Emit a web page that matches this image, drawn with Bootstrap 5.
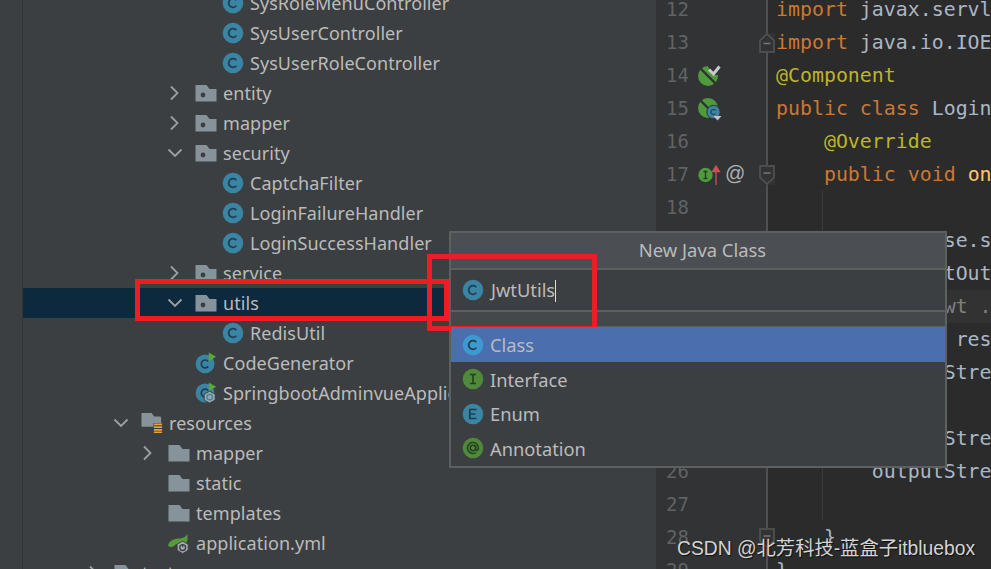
<!DOCTYPE html>
<html lang="en">
<head>
<meta charset="utf-8">
<title>New Java Class</title>
<link href="https://cdn.jsdelivr.net/npm/bootstrap@5.3.0/dist/css/bootstrap.min.css" rel="stylesheet">
<style>
html,body{height:569px;overflow:hidden;background:#3c3f41}
body{position:relative;width:991px;font-family:"Noto Sans","Liberation Sans",sans-serif}
.ide{height:569px;overflow:hidden}
.rail{width:23px;flex:none;border-right:1px solid #323435}
.tree{width:633px;flex:none;margin-top:-12px;font-size:18px;letter-spacing:.06px;color:#bbb}
.trow{height:30px;white-space:nowrap}
.trow.picked{background:#0d293e}
.lv0{padding-left:57px}.lv1{padding-left:84px}.lv2{padding-left:111px}.lv3{padding-left:138px}.lv4{padding-left:165px}
.arrow{width:34px;flex:none;padding-left:5px;display:flex}
.ticon{flex:none;margin-right:6px;display:block}
.w20{width:22px;height:22px}
.editor{flex:1;min-width:0;margin-top:-7px;background:#2b2b2b;font-family:"DejaVu Sans Mono","Liberation Mono",monospace;font-size:19.9px;color:#a9b7c6}
.eline{height:33px;white-space:pre}
.eline.now{background:#323232}
.gut{width:112px;flex:none;height:33px;background:#313335;border-right:2px solid #4f5052;color:#606366;font-size:19px;padding-left:10px;position:relative;line-height:33px;margin-right:8px}
.code{line-height:33px;overflow:hidden}
.kw{color:#cc7832}.ann{color:#bbb529}.fn{color:#ffc66d}.cm{color:#808080}
.gicon{position:absolute;top:50%;translate:0 -50%}
.gi1{left:42px}.gi2{left:69px;font-family:"Liberation Sans",sans-serif;font-size:20px;line-height:22px;color:#afb1b3;translate:0 -60%}
.fold{position:absolute;right:-9px;top:50%;translate:0 -50%;background:#313335}
.guide{position:absolute;left:822px;top:190px;height:330px;border-left:1px solid #3b3b3b}
.dlg{position:absolute;left:449px;top:231px;width:498px;height:237px;overflow:hidden;background:#3c3f41;border:2px solid #5e6060;border-radius:0;font-size:18.3px;color:#bbb}
.dlg>*{flex:none}
.dlg .card-header{height:37px;background:#4b4e52;border:0;border-bottom:2px solid #5e6060;border-radius:0;padding:0 0 0 9px;line-height:33px;text-align:center;color:#bbb;font-size:18.4px}
.nameline{height:42px;border-bottom:2px solid #5e6060;padding-left:11px;gap:7px}
.caret-bar{display:inline-block;width:1px;height:22px;background:#ddd;vertical-align:-5px}
.band{height:15px;background:#45484a;border-bottom:1px solid #5e6060}
.dlg .list-group{border:0;border-radius:0}
.dlg .list-group-item{height:34.5px;background:transparent;border:0;padding:0 0 0 11px;color:#bbb;gap:6px;border-radius:0}
.dlg .list-group-item.active{background:#4b6eaf;color:#bbb;height:35px}
.redbox{position:absolute;border:5px solid #ee1c25;pointer-events:none}
.rb1{left:135px;top:279px;width:314px;height:42px}
.rb2{left:427px;top:254px;width:170px;height:77px}
.mark-w{position:absolute;left:677px;top:537px;font-family:"Liberation Sans","Noto Sans CJK SC",sans-serif;font-size:19.3px;line-height:24px;color:#d4d4d4;text-shadow:1px 1px 1px #111;white-space:nowrap}
</style>
</head>
<body>
<svg width="0" height="0" class="position-absolute">
<defs>
<symbol id="i-right" viewBox="0 0 18 18"><path d="M5 2.500 11.500 9 5 15.500" fill="none" stroke="#9da0a2" stroke-width="1.800"/></symbol>
<symbol id="i-down" viewBox="0 0 18 18"><path d="M2.500 5.500 9 12 15.500 5.500" fill="none" stroke="#9da0a2" stroke-width="1.800"/></symbol>
<symbol id="i-class" viewBox="0 0 22 22"><circle cx="11" cy="11" r="10.300" fill="#3a84a4"/><path d="M14.300 8.300a4.300 4.300 0 1 0 0 5.400" fill="none" stroke="#1d3f50" stroke-width="1.800"/></symbol>
<symbol id="i-pkg" viewBox="0 0 22 22"><path d="M.5 3h11l3 4h7v12.500H.5z" fill="#87939a"/><circle cx="8" cy="13" r="2.400" fill="#3c3f41"/></symbol>
<symbol id="i-dir" viewBox="0 0 22 22"><path d="M.5 3h11l3 4h7v12.500H.5z" fill="#87939a"/></symbol>
<symbol id="i-res" viewBox="0 0 24 24"><path d="M.5 1h11l3 4h7v12h-7v-1H.5z" fill="#87939a"/><path d="M14 6h8v11h-8z" fill="#87939a"/><path d="M13.500 12h10v11h-10z" fill="#3c3f41"/><path d="M14 13.500h9M14 16.500h9M14 19.500h9M14 22h9" stroke="#e3a33a" stroke-width="1.700"/></symbol>
<symbol id="i-run" viewBox="0 0 24 24"><circle cx="11" cy="13" r="10.300" fill="#3a84a4"/><path d="M14.500 10.300a4.300 4.300 0 1 0 0 5.400" fill="none" stroke="#1d3f50" stroke-width="1.800"/><path d="M15 .5v9.500l8-4.700z" fill="#59a83c"/></symbol>
<symbol id="i-boot" viewBox="0 0 24 24"><circle cx="11" cy="12" r="10.300" fill="#3a84a4"/><path d="M14.500 9.300a4.300 4.300 0 1 0 0 5.400" fill="none" stroke="#1d3f50" stroke-width="1.800"/><path d="M15 .5v9.500l8-4.700z" fill="#59a83c"/><path d="M16 10l6 3.300v6.400l-6 3.300-6-3.300v-6.400z" fill="#9aa7b0" stroke="#3c3f41"/><circle cx="16" cy="16.500" r="3" fill="none" stroke="#3a84a4" stroke-width="1.300"/></symbol>
<symbol id="i-yml" viewBox="0 0 24 24"><path d="M0 15C1 8 9 7 13 7c4 0 7-2 8-5 1 6 0 11-3 11H9c-3 3-6 5-9 2z" fill="#589a3a"/><path d="M16 10l6 3.300v6.700l-6 3.500-6-3.500v-6.700z" fill="#a5acb1" stroke="#3c3f41"/><circle cx="16" cy="17" r="3.200" fill="none" stroke="#3c3f41" stroke-width="1.500"/><path d="M16 13.500v3" stroke="#3c3f41" stroke-width="1.300"/></symbol>
<symbol id="i-beanok" viewBox="0 0 24 24"><circle cx="10" cy="12" r="10" fill="#4f9a3d"/><path d="M2 4 18 20" stroke="#2f3133" stroke-width="2.400"/><path d="M9 0h15v11H14z" fill="#313335"/><path d="M11 5.500l4.500 4.500 6-7.500" fill="none" stroke="#c8ccd0" stroke-width="3"/></symbol>
<symbol id="i-bean" viewBox="0 0 24 24"><circle cx="10" cy="11" r="10" fill="#4f9a3d"/><path d="M2 3 18 19" stroke="#2f3133" stroke-width="2.400"/><circle cx="15.500" cy="15" r="6.700" fill="#3a84a4" stroke="#313335"/><path d="M17.500 13.500a2.500 2.500 0 1 0 0 3" fill="none" stroke="#1d3f50" stroke-width="1.200"/><path d="M15.500 19h8l-4 4.500z" fill="#bfc4c7"/></symbol>
<symbol id="i-impl" viewBox="0 0 24 22"><circle cx="7.500" cy="11" r="7.200" fill="#4f9a3d"/><path d="M5.500 7.500h4M5.500 14.500h4M7.500 7.500v7" stroke="#26401f" stroke-width="1.400"/><path d="M18 21V3M14.500 7.500 18 2l3.500 5.500z" stroke="#c75450" stroke-width="1.300" fill="#c75450"/></symbol>
<symbol id="i-iface" viewBox="0 0 22 22"><circle cx="11" cy="11" r="10.300" fill="#4f8a3b"/><path d="M8 6.500h6M8 15.500h6M11 6.500v9" stroke="#26401f" stroke-width="1.600"/></symbol>
<symbol id="i-enum" viewBox="0 0 22 22"><circle cx="11" cy="11" r="10.300" fill="#3a84a4"/><path d="M14.500 6.500H7.800v9h6.700M7.800 11h5.500" fill="none" stroke="#1d3f50" stroke-width="1.700"/></symbol>
<symbol id="i-anno" viewBox="0 0 22 22"><circle cx="11" cy="11" r="10.300" fill="#4f8a3b"/><circle cx="11" cy="11" r="2.700" fill="none" stroke="#26401f" stroke-width="1.500"/><path d="M13.700 8.300v3.900c0 2 2.800 1.900 2.800-1.200a5.500 5.500 0 1 0-2.400 4.500" fill="none" stroke="#26401f" stroke-width="1.500"/></symbol>
<symbol id="i-classon" viewBox="0 0 22 22"><circle cx="11" cy="11" r="10.300" fill="#3d9ad1"/><path d="M14.300 8.300a4.300 4.300 0 1 0 0 5.400" fill="none" stroke="#1d3f50" stroke-width="1.800"/></symbol>
<symbol id="i-foldtop" viewBox="0 0 16 20"><path d="M1 19V7.500L8 1l7 6.500V19z" fill="#313335" stroke="#555" stroke-width="1.500"/><path d="M4.500 10.500h7" stroke="#777" stroke-width="1.500"/></symbol>
<symbol id="i-foldbot" viewBox="0 0 16 20"><path d="M1 1v11.500L8 19l7-6.500V1z" fill="#313335" stroke="#555" stroke-width="1.500"/><path d="M4.500 8h7" stroke="#777" stroke-width="1.500"/></symbol>
</defs>
</svg>

<div class="ide d-flex">
  <div class="rail"></div>
  <div class="tree">
    <div class="trow lv4 d-flex align-items-center"><span class="arrow"></span><svg class="ticon w20"><use href="#i-class"/></svg>SysRoleMenuController</div>
    <div class="trow lv4 d-flex align-items-center"><span class="arrow"></span><svg class="ticon w20"><use href="#i-class"/></svg>SysUserController</div>
    <div class="trow lv4 d-flex align-items-center"><span class="arrow"></span><svg class="ticon w20"><use href="#i-class"/></svg>SysUserRoleController</div>
    <div class="trow lv3 d-flex align-items-center"><span class="arrow"><svg width="18" height="18"><use href="#i-right"/></svg></span><svg class="ticon w20"><use href="#i-pkg"/></svg>entity</div>
    <div class="trow lv3 d-flex align-items-center"><span class="arrow"><svg width="18" height="18"><use href="#i-right"/></svg></span><svg class="ticon w20"><use href="#i-pkg"/></svg>mapper</div>
    <div class="trow lv3 d-flex align-items-center"><span class="arrow"><svg width="18" height="18"><use href="#i-down"/></svg></span><svg class="ticon w20"><use href="#i-pkg"/></svg>security</div>
    <div class="trow lv4 d-flex align-items-center"><span class="arrow"></span><svg class="ticon w20"><use href="#i-class"/></svg>CaptchaFilter</div>
    <div class="trow lv4 d-flex align-items-center"><span class="arrow"></span><svg class="ticon w20"><use href="#i-class"/></svg>LoginFailureHandler</div>
    <div class="trow lv4 d-flex align-items-center"><span class="arrow"></span><svg class="ticon w20"><use href="#i-class"/></svg>LoginSuccessHandler</div>
    <div class="trow lv3 d-flex align-items-center"><span class="arrow"><svg width="18" height="18"><use href="#i-right"/></svg></span><svg class="ticon w20"><use href="#i-pkg"/></svg>service</div>
    <div class="trow picked lv3 d-flex align-items-center"><span class="arrow"><svg width="18" height="18"><use href="#i-down"/></svg></span><svg class="ticon w20"><use href="#i-pkg"/></svg>utils</div>
    <div class="trow lv4 d-flex align-items-center"><span class="arrow"></span><svg class="ticon w20"><use href="#i-class"/></svg>RedisUtil</div>
    <div class="trow lv3 d-flex align-items-center"><span class="arrow"></span><svg class="ticon w20"><use href="#i-run"/></svg>CodeGenerator</div>
    <div class="trow lv3 d-flex align-items-center"><span class="arrow"></span><svg class="ticon w20"><use href="#i-boot"/></svg>SpringbootAdminvueApplication</div>
    <div class="trow lv1 d-flex align-items-center"><span class="arrow"><svg width="18" height="18"><use href="#i-down"/></svg></span><svg class="ticon w20"><use href="#i-res"/></svg>resources</div>
    <div class="trow lv2 d-flex align-items-center"><span class="arrow"><svg width="18" height="18"><use href="#i-right"/></svg></span><svg class="ticon w20"><use href="#i-dir"/></svg>mapper</div>
    <div class="trow lv2 d-flex align-items-center"><span class="arrow"></span><svg class="ticon w20"><use href="#i-dir"/></svg>static</div>
    <div class="trow lv2 d-flex align-items-center"><span class="arrow"></span><svg class="ticon w20"><use href="#i-dir"/></svg>templates</div>
    <div class="trow lv2 d-flex align-items-center"><span class="arrow"></span><svg class="ticon w20"><use href="#i-yml"/></svg>application.yml</div>
    <div class="trow lv0 d-flex align-items-center"><span class="arrow"><svg width="18" height="18"><use href="#i-right"/></svg></span><svg class="ticon w20"><use href="#i-dir"/></svg>test</div>
  </div>
  <div class="editor">
    <div class="eline d-flex"><div class="gut">12</div><div class="code"><span class="kw">import</span> javax.servlet</div></div>
    <div class="eline d-flex"><div class="gut">13<svg class="fold" width="16" height="20"><use href="#i-foldtop"/></svg></div><div class="code"><span class="kw">import</span> java.io.IOException</div></div>
    <div class="eline d-flex"><div class="gut">14<svg class="gicon gi1" width="24" height="24"><use href="#i-beanok"/></svg></div><div class="code ann">@Component</div></div>
    <div class="eline d-flex"><div class="gut">15<svg class="gicon gi1" width="24" height="24"><use href="#i-bean"/></svg></div><div class="code"><span class="kw">public class</span> LoginSuccess</div></div>
    <div class="eline d-flex"><div class="gut">16</div><div class="code ann">    @Override</div></div>
    <div class="eline d-flex"><div class="gut">17<svg class="gicon gi1" width="24" height="22"><use href="#i-impl"/></svg><span class="gicon gi2">@</span><svg class="fold" width="16" height="20"><use href="#i-foldbot"/></svg></div><div class="code">    <span class="kw">public void</span> <span class="fn">onAuthentication</span></div></div>
    <div class="eline d-flex"><div class="gut">18</div><div class="code"></div></div>
    <div class="eline d-flex"><div class="gut">19</div><div class="code">        response.setContentType</div></div>
    <div class="eline d-flex"><div class="gut">20</div><div class="code">        ServletOutputStream</div></div>
    <div class="eline now d-flex"><div class="gut">21</div><div class="code cm">        //   jwt .</div></div>
    <div class="eline d-flex"><div class="gut">22</div><div class="code">        Result result</div></div>
    <div class="eline d-flex"><div class="gut">23</div><div class="code">        outputStream</div></div>
    <div class="eline d-flex"><div class="gut">24</div><div class="code"></div></div>
    <div class="eline d-flex"><div class="gut">25</div><div class="code">        outputStream</div></div>
    <div class="eline d-flex"><div class="gut">26</div><div class="code">        outputStream</div></div>
    <div class="eline d-flex"><div class="gut">27</div><div class="code"></div></div>
    <div class="eline d-flex"><div class="gut">28<svg class="fold" width="16" height="20"><use href="#i-foldbot"/></svg></div><div class="code">    }</div></div>
    <div class="eline d-flex"><div class="gut">29</div><div class="code">}</div></div>
  </div>
</div>
<div class="guide"></div>

<div class="dlg card">
  <div class="card-header">New Java Class</div>
  <div class="nameline d-flex align-items-center"><svg width="22" height="22"><use href="#i-class"/></svg><span>JwtUtils<span class="caret-bar"></span></span></div>
  <div class="band"></div>
  <div class="list-group">
    <div class="list-group-item active d-flex align-items-center"><svg width="22" height="22"><use href="#i-classon"/></svg>Class</div>
    <div class="list-group-item d-flex align-items-center"><svg width="22" height="22"><use href="#i-iface"/></svg>Interface</div>
    <div class="list-group-item d-flex align-items-center"><svg width="22" height="22"><use href="#i-enum"/></svg>Enum</div>
    <div class="list-group-item d-flex align-items-center"><svg width="22" height="22"><use href="#i-anno"/></svg>Annotation</div>
  </div>
</div>

<div class="redbox rb1"></div>
<div class="redbox rb2"></div>
<div class="mark-w">CSDN @北芳科技-蓝盒子itbluebox</div>
<script src="https://cdn.jsdelivr.net/npm/bootstrap@5.3.0/dist/js/bootstrap.bundle.min.js"></script>
</body>
</html>
